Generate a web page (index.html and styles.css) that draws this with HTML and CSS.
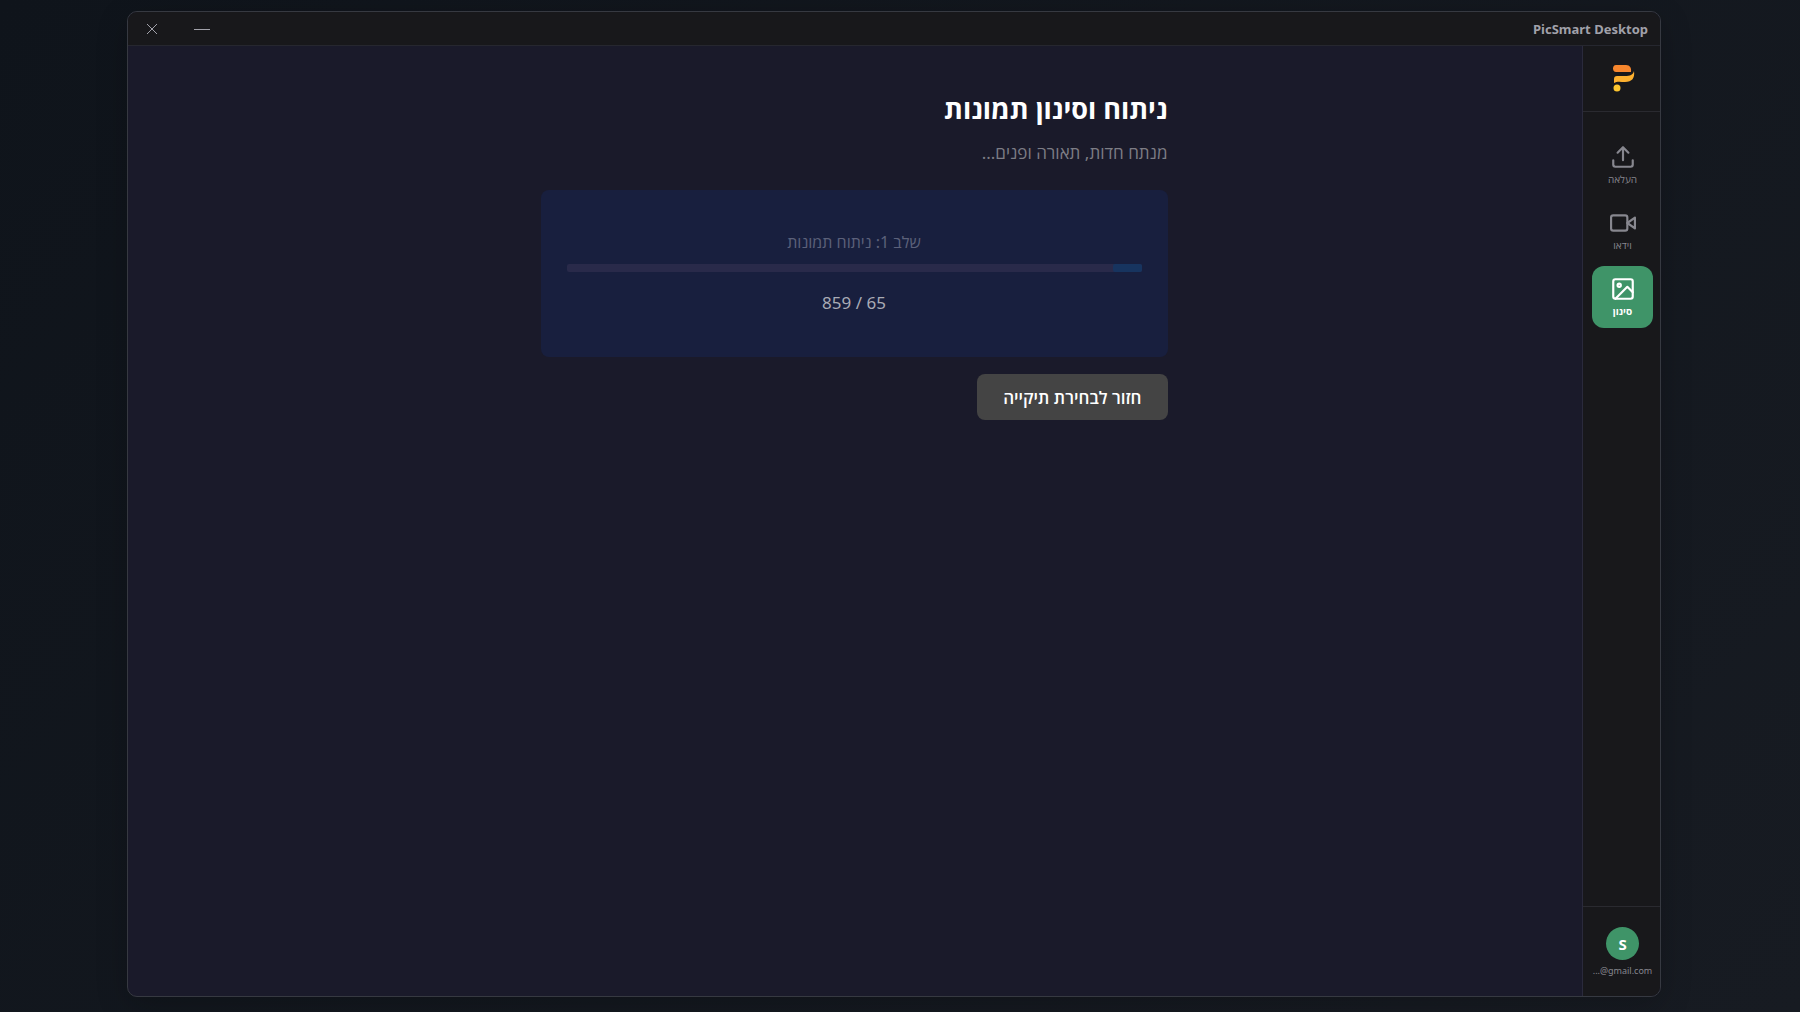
FILE: index.html
```
<!DOCTYPE html>
<html lang="he" dir="rtl">
<head>
<meta charset="utf-8">
<meta name="viewport" content="width=device-width, initial-scale=1">
<title>PicSmart Desktop</title>
<link rel="stylesheet" href="styles.css">
</head>
<body>
<div class="window">
  <header class="titlebar">
    <span class="app-name" dir="ltr">PicSmart Desktop</span>
    <div class="window-controls">
      <button class="window-button" type="button" aria-label="מזעור">
        <svg width="16" height="16" viewBox="0 0 16 16"><path d="M0 8.500h16"/></svg>
      </button>
      <button class="window-button" type="button" aria-label="סגירה">
        <svg width="12" height="12" viewBox="0 0 12 12"><path d="M1 1l10 10M11 1L1 11"/></svg>
      </button>
    </div>
  </header>
  <div class="body">
    <aside class="sidebar">
      <div class="brand">
        <svg width="24" height="28" viewBox="0 0 24 28">
          <path fill="#f7862d" d="M5 0h10c4 0 5.500 3 5 7h-15C1 7 1 0 5 0z"/>
          <path fill="#fdb02f" d="M6 11h8c5 0 8-1 9-5 1 7-2 11-9 11-4 0-8-1-11 1v-4c0-2 1-3 3-3z"/>
          <circle fill="#fec62e" cx="6" cy="23" r="3.500"/>
        </svg>
      </div>
      <nav class="nav">
        <a class="nav-item" href="#upload">
          <svg class="icon" viewBox="0 0 24 24"><path d="M21 15v4a2 2 0 0 1-2 2H5a2 2 0 0 1-2-2v-4M17 8l-5-5-5 5M12 3v12"/></svg>
          <span>העלאה</span>
        </a>
        <a class="nav-item" href="#video">
          <svg class="icon" viewBox="0 0 24 24"><path d="M23 7l-7 5 7 5V7z"/><rect x="1" y="5" width="15" height="14" rx="2"/></svg>
          <span>וידאו</span>
        </a>
        <a class="nav-item nav-item-active" href="#filter" aria-current="page">
          <svg class="icon" viewBox="0 0 24 24"><rect x="3" y="3" width="18" height="18" rx="2"/><circle cx="8.500" cy="8.500" r="1.500"/><path d="M21 15l-5-5L5 21"/></svg>
          <span>סינון</span>
        </a>
      </nav>
      <div class="account">
        <span class="avatar">S</span>
        <span class="email" dir="ltr">...@gmail.com</span>
      </div>
    </aside>
    <main class="main">
      <div class="content">
        <h1 class="title">ניתוח וסינון תמונות</h1>
        <p class="subtitle">מנתח חדות, תאורה ופנים...</p>
        <section class="card">
          <p class="stage" id="stage">שלב 1: ניתוח תמונות</p>
          <div class="progress" role="progressbar" aria-labelledby="stage" aria-valuemin="0" aria-valuemax="859" aria-valuenow="65">
            <div class="progress-fill"></div>
          </div>
          <p class="count">65 / 859</p>
        </section>
        <button class="back-button" type="button">חזור לבחירת תיקייה</button>
      </div>
    </main>
  </div>
</div>
</body>
</html>
```
FILE: styles.css
```
* {
  box-sizing: border-box;
}

body {
  display: flex;
  height: 100vh;
  margin: 0;
  padding: 11px 139px 15px 127px;
  direction: ltr;
  background: linear-gradient(135deg, #0f141b, #171b22);
  color: #fff;
  font-family: "Noto Sans", "Open Sans", sans-serif;
}

h1,
p {
  margin: 0;
}

button {
  border: 0;
  font: inherit;
  color: inherit;
}

svg {
  display: block;
}

.window {
  display: flex;
  flex: 1;
  flex-direction: column;
  direction: rtl;
  overflow: hidden;
  border: 1px solid #363941;
  border-radius: 10px;
  background: #1a1a2a;
  box-shadow: 0 8px 32px rgba(0, 0, 0, 0.2);
}

.titlebar {
  display: flex;
  align-items: center;
  justify-content: space-between;
  height: 34px;
  padding: 0 12px 0 0;
  border-bottom: 1px solid #26272f;
  background: #18181b;
}

.app-name {
  color: #a1a1aa;
  font-size: 13px;
  font-weight: 700;
}

.window-controls {
  display: flex;
  margin-left: -1px;
}

.window-button {
  display: grid;
  place-items: center;
  width: 50px;
  height: 33px;
  padding: 0;
  background: none;
}

.window-button svg {
  fill: none;
  stroke: #a1a1aa;
  stroke-width: 1;
}

.body {
  display: flex;
  flex: 1;
}

.sidebar {
  display: flex;
  flex-direction: column;
  width: 78px;
  border-left: 1px solid #2a2a3c;
  background: #18181b;
}

.brand {
  display: grid;
  place-items: center;
  height: 66px;
  padding-left: 3px;
  border-bottom: 1px solid #2a2a30;
}

.nav {
  display: flex;
  flex: 1;
  flex-direction: column;
  gap: 4px;
  padding: 22px 7px 0 9px;
}

.nav-item {
  display: flex;
  flex-direction: column;
  align-items: center;
  height: 62px;
  padding-top: 10px;
  border-radius: 12px;
  color: #87878f;
  font-size: 10px;
  line-height: 18px;
  text-decoration: none;
}

.nav-item-active {
  background: #3f9468;
  color: #fff;
  font-weight: 700;
}

.icon {
  width: 26px;
  height: 26px;
  fill: none;
  stroke: currentColor;
  stroke-width: 2;
  stroke-linecap: round;
  stroke-linejoin: round;
}

.account {
  display: flex;
  flex-direction: column;
  align-items: center;
  gap: 2px;
  height: 90px;
  padding: 20px 0 0 2px;
  border-top: 1px solid #2a2a30;
}

.avatar {
  display: grid;
  place-items: center;
  width: 33px;
  height: 33px;
  border-radius: 50%;
  background: #3f9468;
  font-size: 15px;
  font-weight: 700;
}

.email {
  color: #87878f;
  font-size: 9px;
  line-height: 18px;
}

.main {
  flex: 1;
  padding: 45px 25px 45px 23px;
}

.content {
  max-width: 627px;
  margin: 0 auto;
}

.title {
  font-size: 27px;
  font-weight: 700;
  line-height: 36px;
}

.subtitle {
  margin-top: 14px;
  color: #7d7d85;
  font-size: 17px;
  line-height: 24px;
}

.card {
  margin-top: 25px;
  padding: 42px 26px;
  border-radius: 8px;
  background: #181f3e;
  text-align: center;
}

.stage {
  color: #5c617a;
  font-size: 16px;
  line-height: 20px;
}

.progress {
  height: 8px;
  margin-top: 12px;
  border-radius: 2px;
  background: #292a4a;
}

.progress-fill {
  width: 5%;
  height: 8px;
  border-radius: 2px;
  background: #17345f;
}

.count {
  margin-top: 19px;
  color: #a9abb5;
  font-size: 17px;
  line-height: 24px;
}

.back-button {
  display: block;
  height: 46px;
  margin-top: 17px;
  padding: 0 26px;
  border-radius: 8px;
  background: #444;
  font-size: 17px;
  font-weight: 600;
}
```
